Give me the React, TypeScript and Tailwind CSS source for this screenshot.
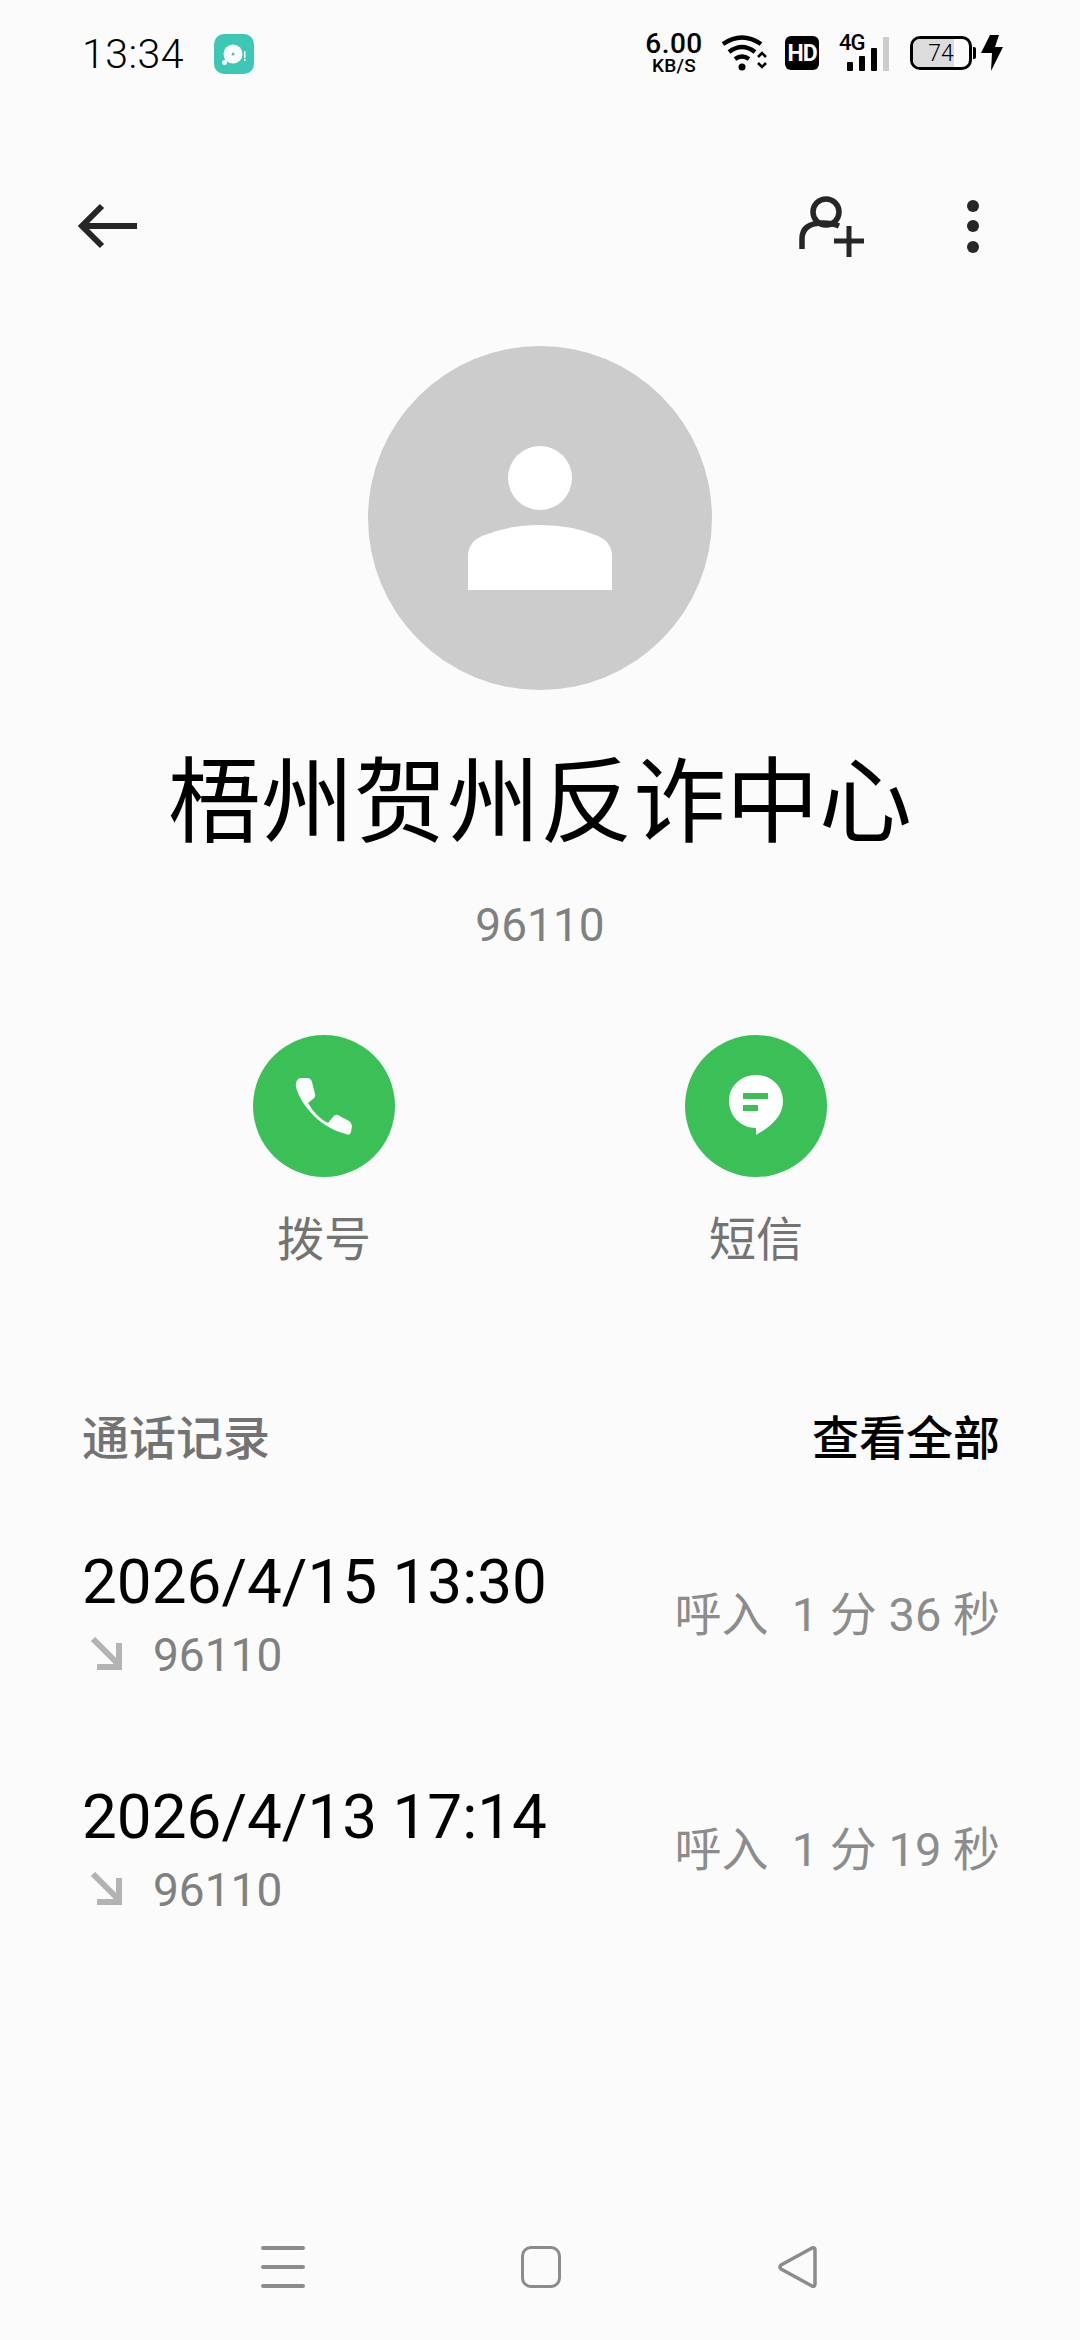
const cjk = "font-['Roboto','Noto_Sans_CJK_SC',sans-serif]";

function StatusBar() {
  return (
    <div className="flex h-[106px] items-center pl-[82px] pr-[77px]">
      <span className="mt-[2px] w-[132px] text-[41px] leading-none font-light tracking-[0.5px] text-black">13:34</span>
      <svg width="40" height="40" viewBox="0 0 40 40" className="mt-[1px]">
        <rect width="40" height="40" rx="10" fill="#3cc8b4" />
        <circle cx="19" cy="20" r="9.5" fill="#fff" />
        <circle cx="19" cy="20" r="1.5" fill="#3cc8b4" />
        <circle cx="10.5" cy="28.5" r="2.5" fill="#fff" />
        <rect x="30" y="17" width="1.5" height="7" fill="#fff" />
        <rect x="30" y="25" width="1.5" height="2" fill="#fff" />
      </svg>
      <div className="ml-auto flex items-center">
        <div className="flex w-[58px] flex-col items-center gap-[3px] font-['Roboto',sans-serif] text-black">
          <span className="text-[28px] leading-[22px] font-medium tracking-[0.5px]">6.00</span>
          <span className="text-[19px] leading-[16px] font-medium tracking-[0.3px]">KB/S</span>
        </div>
        <svg width="48" height="38" viewBox="0 0 48 38" className="ml-[18px]">
          <path d="M2 10 Q21 -3 40 10" fill="none" stroke="#000" strokeWidth="4.5" />
          <path d="M8 18 Q21 8 34 18" fill="none" stroke="#000" strokeWidth="4.5" />
          <path d="M14 25 Q21 20 28 25" fill="none" stroke="#000" strokeWidth="4.5" />
          <circle cx="21" cy="33" r="3.5" fill="#000" />
          <path d="M37 23 L41 19 L45 23 M37 29 L41 33 L45 29" fill="none" stroke="#000" strokeWidth="2.6" />
        </svg>
        <div className="ml-[16px] flex h-[34px] w-[34px] items-center justify-center rounded-[6px] bg-black font-['Roboto',sans-serif] text-[23px] leading-none font-bold tracking-[-1px] text-white">HD</div>
        <div className="relative ml-[20px] h-[36px] w-[50px] font-['Roboto',sans-serif] text-black">
          <span className="absolute -top-[4px] left-0 text-[22px] leading-[24px] font-medium tracking-[-1px]">4G</span>
          <div className="absolute inset-0 flex items-end justify-end gap-[6px]">
            <div className="h-[9px] w-[6px] rounded-[1px] bg-black" />
            <div className="h-[15px] w-[6px] rounded-[1px] bg-black" />
            <div className="h-[23px] w-[6px] rounded-[1px] bg-black" />
            <div className="h-[34px] w-[6px] bg-[#cccccc]" />
          </div>
        </div>
        <div className="ml-[21px] flex items-center">
          <div className="relative flex h-[34px] w-[62px] items-center justify-center overflow-hidden rounded-[10px] border-[3px] border-black">
            <div className="absolute inset-y-0 left-0 w-[74%] bg-[#dcdcdc]" />
            <span className="relative font-['Roboto',sans-serif] text-[23px] leading-none font-light text-black">74</span>
          </div>
          <div className="ml-[1px] h-[12px] w-[3px] rounded-r-[2px] bg-black" />
        </div>
        <svg width="22" height="36" viewBox="0 0 22 36" className="ml-[5px]">
          <path d="M9 0 H18 L14 12 H22 L10 36 L11 18 H0 Z" fill="#000" />
        </svg>
      </div>
    </div>
  );
}

function TopBar() {
  return (
    <div className="mt-[90px] flex h-[60px] items-center pl-[78px] pr-[101px]">
      <svg width="60" height="46" viewBox="0 0 60 46">
        <path d="M24 3 L4 23 L24 43 M4 23 H59" fill="none" stroke="#262626" strokeWidth="6" />
      </svg>
      <svg width="66" height="62" viewBox="0 0 66 62" className="ml-auto mt-[2px]">
        <circle cx="27" cy="16" r="13" fill="none" stroke="#262626" strokeWidth="5.5" />
        <path d="M3 53 V43 Q3 27 24 27 Q33 27 40 30" fill="none" stroke="#262626" strokeWidth="5.5" />
        <path d="M35 45 H65 M50 30 V61" fill="none" stroke="#262626" strokeWidth="5" />
      </svg>
      <div className="ml-[102px] flex flex-col gap-[8.5px]">
        <div className="size-[12px] rounded-full bg-[#262626]" />
        <div className="size-[12px] rounded-full bg-[#262626]" />
        <div className="size-[12px] rounded-full bg-[#262626]" />
      </div>
    </div>
  );
}

function Action({ label, children }: { label: string; children: React.ReactNode }) {
  return (
    <div className="flex w-[142px] flex-col items-center">
      <div className="flex size-[142px] items-center justify-center rounded-full bg-[#3bbf57]">{children}</div>
      <span className="mt-[36px] whitespace-nowrap text-[47px] leading-[54px] text-[#737373]">{label}</span>
    </div>
  );
}

function Row({ date, dur }: { date: string; dur: string }) {
  return (
    <div className="flex h-[235px] items-start justify-between">
      <div className="flex flex-col">
        <span className="text-[62px] leading-[72px] text-black">{date}</span>
        <div className="mt-[10px] flex items-center">
          <svg width="34" height="34" viewBox="0 0 34 34" className="ml-[8px] -mt-[2px]">
            <path d="M3 2 L29 28 M29 6 V30 H7" fill="none" stroke="#b3b3b3" strokeWidth="6" />
          </svg>
          <span className="ml-[29px] text-[46px] leading-[54px] text-[#808080]">96110</span>
        </div>
      </div>
      <span className="mt-[42px] whitespace-pre text-[47px] leading-[54px] text-[#8c8c8c]">{dur}</span>
    </div>
  );
}

export default function App() {
  return (
    <div className={`flex h-[2340px] w-[1080px] flex-col overflow-hidden bg-[#fbfbfb] ${cjk}`}>
      <StatusBar />
      <TopBar />
      <div className="mt-[90px] flex size-[344px] items-center justify-center self-center rounded-full bg-[#cccccc]">
        <svg width="144" height="146" viewBox="0 0 144 146">
          <circle cx="72" cy="33" r="32" fill="#fff" />
          <path d="M0 145 V112 Q0 97 14 91 Q40 80 72 80 Q104 80 130 91 Q144 97 144 112 V145 Z" fill="#fff" />
        </svg>
      </div>
      <h1 className="mt-[59px] self-center text-[93px] leading-[110px] font-normal whitespace-nowrap text-black">梧州贺州反诈中心</h1>
      <p className="mt-[39px] self-center text-[46px] leading-[54px] text-[#808080]">96110</p>
      <div className="mt-[83px] flex justify-center gap-[290px]">
        <Action label="拨号">
          <svg width="58" height="58" viewBox="0 0 58 58">
            <path d="M5 1 H12 Q16 1 17 5 L20 17 Q21 20 18 22 L13 26 Q21 40 33 46 L38 40 Q40 37 43 38 L54 44 Q57 46 57 49 L56 55 Q55 59 51 57 C28 52 6 30 1 10 Q0 3 5 1 Z" fill="#fff" />
          </svg>
        </Action>
        <Action label="短信">
          <svg width="54" height="62" viewBox="0 0 54 62">
            <path d="M27 0 C42 0 54 11 54 26 C54 42 41 52 27 60 V53 C12 53 0 41 0 26 C0 11 12 0 27 0 Z" fill="#fff" />
            <rect x="14" y="18" width="25" height="6" fill="#3bbf57" />
            <rect x="14" y="30" width="15" height="6" fill="#3bbf57" />
          </svg>
        </Action>
      </div>
      <div className="mt-[145px] flex items-center justify-between pl-[82px] pr-[80px]">
        <span className="text-[47px] leading-[54px] font-medium text-[#737373]">通话记录</span>
        <span className="text-[47px] leading-[54px] font-medium text-black">查看全部</span>
      </div>
      <div className="mt-[80px] flex flex-col pl-[82px] pr-[80px]">
        <Row date="2026/4/15 13:30" dur={"呼入  1 分 36 秒"} />
        <Row date="2026/4/13 17:14" dur={"呼入  1 分 19 秒"} />
      </div>
      <div className="mt-auto mb-[51px] flex h-[44px] items-center pl-[261px]">
        <div className="flex w-[44px] flex-col gap-[15px]">
          <div className="h-[4px] rounded-full bg-[#8c8c8c]" />
          <div className="h-[4px] rounded-full bg-[#8c8c8c]" />
          <div className="h-[4px] rounded-full bg-[#8c8c8c]" />
        </div>
        <div className="ml-[216px] h-[42px] w-[40px] rounded-[10px] border-[3.5px] border-[#8c8c8c]" />
        <svg width="42" height="44" viewBox="0 0 42 44" className="ml-[216px]">
          <path d="M38 5 Q38 2 35 3 L4 20 Q2 22 4 24 L35 41 Q38 42 38 39 Z" fill="none" stroke="#8c8c8c" strokeWidth="3.5" strokeLinejoin="round" />
        </svg>
      </div>
    </div>
  );
}
